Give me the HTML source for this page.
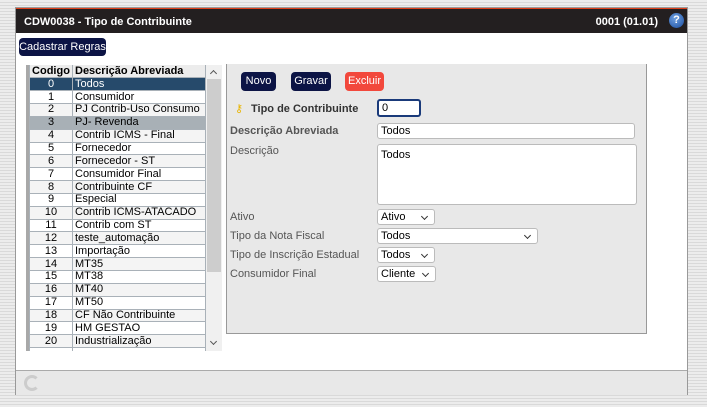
<!DOCTYPE html>
<html><head><meta charset="utf-8"><style>
*{box-sizing:border-box;margin:0;padding:0}
body{width:707px;height:407px;overflow:hidden;font-family:"Liberation Sans",sans-serif;font-size:11px;background:repeating-linear-gradient(#ececec 0 2px,#d9d9d9 2px 3px);position:relative}
.win{position:absolute;left:15px;top:7px;width:673px;height:388px;background:#fff;border:1px solid #999}
.title{position:absolute;left:0;top:0;width:100%;height:25px;background:#231f20;border-top:1px solid #e0401a;color:#fff;font-weight:bold;font-size:11px}
.title .l{position:absolute;left:8px;top:7px}
.title .r{position:absolute;right:29px;top:7px}
.help{position:absolute;right:3px;top:4px;width:15px;height:15px;border-radius:50%;background:radial-gradient(circle at 40% 35%,#6fa0e0,#1a4d9e);color:#fff;font-size:11px;text-align:center;line-height:15px}
.btn{position:absolute;background:#0c1445;color:#fff;border-radius:4px;font-size:11px;text-align:center}
.list{position:absolute;left:10px;top:57px;width:196px;height:286px;background:#f0f0f0;overflow:hidden;border-left:3px solid #a8a8a8}
table{border-collapse:collapse;width:177px;font-size:11px}
td,th{height:12.85px;border:1px solid #a9b1b8;padding:0 2px;line-height:11px;color:#000}
th{background:#ececec;text-align:left;border-top:none}
td:first-child,th:first-child{text-align:center;width:43px}
tr:nth-child(even) td{background:#f4f4f4}
tr:nth-child(odd) td{background:#fff}
tr.sel td{background:#264a6b!important;color:#fff}
tr.hi td{background:#a8b0b6!important}
.sb{position:absolute;left:177px;top:0;width:16px;height:286px;background:#f0f0f0}
.thumb{position:absolute;left:1px;top:14px;width:14px;height:193px;background:#cdcdcd}
.panel{position:absolute;left:210px;top:56px;width:421px;height:270px;background:#e8e8e8;border:1px solid #999;border-top:none}
.lab{position:absolute;left:3px;color:#555;font-size:11px}
.inp{position:absolute;background:#fff;border:1px solid #bbb;border-radius:3px;font-size:11px;padding-left:3px;color:#000}
.sel2:after{content:"";position:absolute;right:7px;top:4px;width:4px;height:4px;border-right:1px solid #333;border-bottom:1px solid #333;transform:rotate(45deg)}
.status{position:absolute;left:0;top:362px;width:100%;height:25px;background:#e8e8e8;border-top:1px solid #aaa}
.arr{position:absolute;left:5px;width:5px;height:5px;border-left:1.5px solid #555;border-top:1.5px solid #555}
</style></head><body>
<div class="win">
<div class="title"><span class="l">CDW0038 - Tipo de Contribuinte</span><span class="r">0001 (01.01)</span><div class="help">?</div></div>
<div class="btn" style="left:3px;top:30px;width:87px;height:18px;line-height:18px">Cadastrar Regras</div>
<div class="list">
<table>
<tr><th>Codigo</th><th>Descrição Abreviada</th></tr>
<tr class="sel"><td>0</td><td>Todos</td></tr>
<tr><td>1</td><td>Consumidor</td></tr>
<tr><td>2</td><td>PJ Contrib-Uso Consumo</td></tr>
<tr class="hi"><td>3</td><td>PJ- Revenda</td></tr>
<tr><td>4</td><td>Contrib ICMS - Final</td></tr>
<tr><td>5</td><td>Fornecedor</td></tr>
<tr><td>6</td><td>Fornecedor - ST</td></tr>
<tr><td>7</td><td>Consumidor Final</td></tr>
<tr><td>8</td><td>Contribuinte CF</td></tr>
<tr><td>9</td><td>Especial</td></tr>
<tr><td>10</td><td>Contrib ICMS-ATACADO</td></tr>
<tr><td>11</td><td>Contrib com ST</td></tr>
<tr><td>12</td><td>teste_automação</td></tr>
<tr><td>13</td><td>Importação</td></tr>
<tr><td>14</td><td>MT35</td></tr>
<tr><td>15</td><td>MT38</td></tr>
<tr><td>16</td><td>MT40</td></tr>
<tr><td>17</td><td>MT50</td></tr>
<tr><td>18</td><td>CF Não Contribuinte</td></tr>
<tr><td>19</td><td>HM GESTAO</td></tr>
<tr><td>20</td><td>Industrialização</td></tr>
<tr><td>&nbsp;</td><td></td></tr>
</table>
<div class="sb"><div class="thumb"></div><div class="arr" style="top:6px;transform:rotate(45deg)"></div><div class="arr" style="top:274px;transform:rotate(225deg)"></div></div>
</div>
<div class="panel">
<div class="btn" style="left:14px;top:8px;width:35px;height:19px;line-height:19px">Novo</div>
<div class="btn" style="left:64px;top:8px;width:40px;height:19px;line-height:19px">Gravar</div>
<div class="btn" style="left:118px;top:8px;width:39px;height:19px;line-height:19px;background:#f2483c">Excluir</div>
<div class="lab" style="left:8px;top:38px;color:#e8b400">⚷</div>
<div class="lab" style="left:24px;top:39px;color:#333;font-weight:bold">Tipo de Contribuinte</div>
<div class="inp" style="left:150px;top:35px;width:44px;height:18px;border:2px solid #1a3a7a;line-height:14px">0</div>
<div class="lab" style="top:61px;font-weight:bold;color:#555">Descrição Abreviada</div>
<div class="inp" style="left:150px;top:59px;width:258px;height:16px;line-height:14px">Todos</div>
<div class="lab" style="top:81px">Descrição</div>
<div class="inp" style="left:150px;top:80px;width:260px;height:61px;padding-top:4px">Todos</div>
<div class="lab" style="top:147px">Ativo</div>
<div class="inp sel2" style="left:150px;top:145px;width:58px;height:16px;line-height:15px">Ativo</div>
<div class="lab" style="top:166px">Tipo da Nota Fiscal</div>
<div class="inp sel2" style="left:150px;top:164px;width:161px;height:16px;line-height:15px">Todos</div>
<div class="lab" style="top:185px">Tipo de Inscrição Estadual</div>
<div class="inp sel2" style="left:150px;top:183px;width:58px;height:16px;line-height:15px">Todos</div>
<div class="lab" style="top:204px">Consumidor Final</div>
<div class="inp sel2" style="left:150px;top:202px;width:59px;height:16px;line-height:15px">Cliente</div>
</div>
<div class="status"><div style="position:absolute;left:8px;top:4px;width:16px;height:16px;border-radius:50%;border:3px solid #ccc;border-right-color:#e8e8e8"></div></div>
</div>
</body></html>
